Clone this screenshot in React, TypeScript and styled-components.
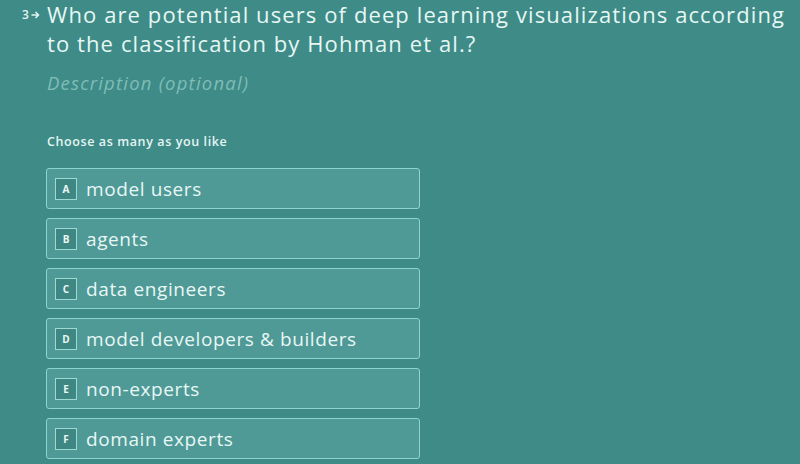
import React from "react";
import styled, { createGlobalStyle } from "styled-components";

const Global = createGlobalStyle`
  html, body { margin: 0; padding: 0; background: #3e8b87; }
  body { font-family: "Open Sans", "Noto Sans", sans-serif; overflow: hidden; }
`;

const Page = styled.div`
  width: 800px;
  height: 464px;
  background: #3e8b87;
  display: flex;
  padding: 0 0 0 22px;
  box-sizing: border-box;
`;

const Num = styled.div`
  width: 25px;
  flex: none;
  display: flex;
  align-items: center;
  gap: 2px;
  height: 29px;
  color: #e3f5f2;
  font-size: 12px;
  font-weight: 600;
`;

const Body = styled.div`
  flex: 1;
  min-width: 0;
  display: flex;
  flex-direction: column;
`;

const Question = styled.div`
  color: #e6f7f4;
  font-size: 22px;
  font-weight: 500;
  line-height: 29px;
  letter-spacing: 1.1px;
`;

const Description = styled.div`
  color: #7fbdb7;
  font-size: 18.5px;
  font-style: italic;
  margin-top: 12px;
  line-height: 26px;
  letter-spacing: 1.2px;
`;

const Hint = styled.div`
  color: #e3f5f2;
  font-size: 12.5px;
  font-weight: 600;
  margin-top: 38px;
  line-height: 16px;
  letter-spacing: 0.6px;
`;

const Options = styled.div`
  display: flex;
  flex-direction: column;
  gap: 9px;
  margin-top: 18px;
  width: 374px;
  margin-left: -1px;
`;

const Option = styled.div`
  height: 41px;
  box-sizing: border-box;
  border: 1.5px solid #8ed4ce;
  border-radius: 3px;
  background: #4f9a96;
  display: flex;
  align-items: center;
  padding-left: 8px;
  gap: 9px;
`;

const Key = styled.span`
  width: 22px;
  height: 22px;
  box-sizing: border-box;
  border: 1.5px solid #9ddad4;
  background: #3f8783;
  color: #eaf8f6;
  font-size: 10px;
  font-weight: 700;
  display: flex;
  align-items: center;
  justify-content: center;
`;

const Label = styled.span`
  color: #e8f7f5;
  font-size: 19px;
  font-weight: 500;
  line-height: 24px;
  letter-spacing: 0.6px;
`;

const items = [
  ["A", "model users"],
  ["B", "agents"],
  ["C", "data engineers"],
  ["D", "model developers & builders"],
  ["E", "non-experts"],
  ["F", "domain experts"],
];

export default function App() {
  return (
    <>
      <Global />
      <Page>
        <Num>
          <span>3</span>
          <svg width="9" height="8" viewBox="0 0 9 8">
            <path d="M0.5 4h7M4.5 1l3 3-3 3" stroke="#e3f5f2" strokeWidth="1.5" fill="none" />
          </svg>
        </Num>
        <Body>
          <Question>
            Who are potential users of deep learning visualizations according
            <br />
            to the classification by Hohman et al.?
          </Question>
          <Description>Description (optional)</Description>
          <Hint>Choose as many as you like</Hint>
          <Options>
            {items.map(([k, t]) => (
              <Option key={k}>
                <Key>{k}</Key>
                <Label>{t}</Label>
              </Option>
            ))}
          </Options>
        </Body>
      </Page>
    </>
  );
}
